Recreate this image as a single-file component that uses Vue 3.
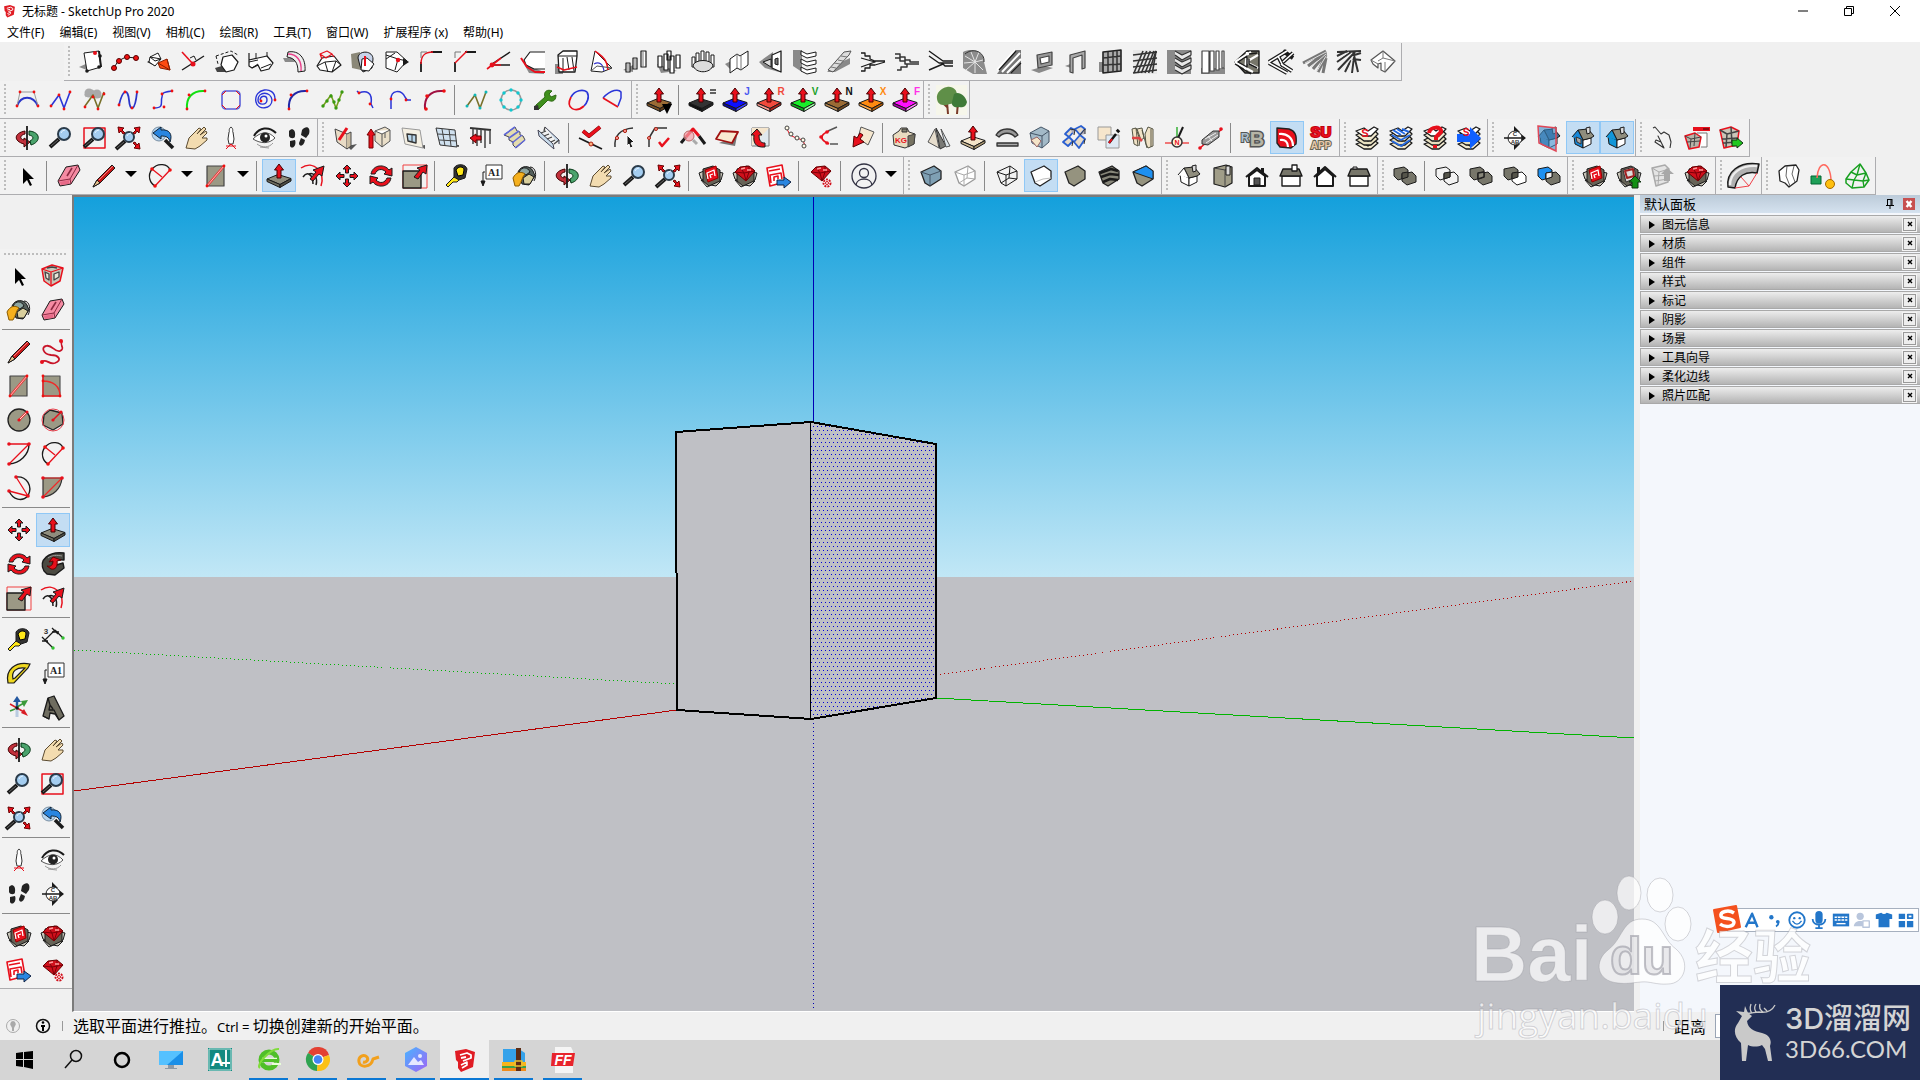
<script setup>
const p = (d, s = '#1a1a1a', f = 'none', w = 1) =>
  `<path d="${d}" stroke="${s}" fill="${f}" stroke-width="${w}" stroke-linejoin="round"/>`
const a = (d, f) => `<path d="${d}" stroke="none" fill="${f}"/>`
const dots = (pts, f = '#f01010', r = 1.4) =>
  pts.map(([x, y]) => `<circle cx="${x}" cy="${y}" r="${r}" fill="${f}" stroke="none"/>`).join('')
const t = (x, y, size, f, s, stroke = 'none', sw = 1) =>
  `<text x="${x}" y="${y}" font-size="${size}" font-weight="700" fill="${f}" stroke="${stroke}" stroke-width="${sw}" paint-order="stroke" text-anchor="middle">${s}</text>`

const RED = '#e8101c'
const K = '#1a1a1a'
const W = '#ffffff'
const G = '#8f8d7d'
const SH = '#8a8a8a'

const lens = (x, y, r) =>
  p(`M${x - r + 1} ${y + r - 1}L${x - r - 8} ${y + r + 7}`, K, 'none', 4) +
  p(`M${x - r} ${y + r}L${x - r - 7} ${y + r + 6}`, '#666', 'none', 1) +
  `<circle cx="${x}" cy="${y}" r="${r}" fill="#a4cdf0" stroke="#2a3b4a" stroke-width="2"/>` +
  p(`M${x - r + 3} ${y - 1}q1 -3 4 -3`, '#e4f3ff', 'none', 1)
const slab = (c, l, r) =>
  p('M0 15L11 10.500L24 14.500L13 20.500z', K, c) + p('M0 15V17.500L13 23.500V20.500z', K, l) + p('M24 14.500V17L13 23.500V20.500z', K, r) +
  p('M12 0L16.500 6H14V14H10V6H7.500z', '#400', RED, 1)
const rcube = (f, s = '#222') => p('M2 8L15 2L22 7V15L11 22L6 19z', s, f, 1.3)
const arrow4 = p('M12 1L16 5H13.500V9H10.500V5H8zM12 23L16 19H13.500V15H10.500V19H8zM1 12L5 8V10.500H9V13.500H5V16zM23 12L19 8V10.500H15V13.500H19V16z', K, RED)
const stack = (c) =>
  p('M1 18L7 16L13 20L20 15L23 17L16 23H9z', K, '#f2ead0', 1.3) + p('M1 14L7 11L13 15L20 10L23 13L16 19H9z', K, c, 1.3) +
  p('M1 9L7 6L13 10L20 5L23 8L16 15H9z', K, '#f2ead0', 1.3) + p('M1 5L9 2L13 5L19 1L23 3L16 10H8z', K, W, 1.3)
const house = (wall, roof) =>
  p('M3 10L12 14V22L4 18z', K, wall) + p('M12 14L20 12V18L12 22z', K, W) + p('M12 14L7 4L17 3L23 10L20 12z', K, roof) +
  p('M1 11L7 4L12 14', K, wall) + p('M15 2L19 1V7L16 8z', K, '#ddd')
const solids = (f1, f2, s = K) =>
  p('M1 5L11 3L15 6V13L5 16L1 12z', s, f1) + p('M9 10L19 8L23 12V18L14 21L9 17z', s, f2) + p('M9 9L15 8V13L9 15z', s, '#55544a')
const boxRed = (c) =>
  p('M0 9L5 7L6 17L2 15zM24 9L19 8L18 17L22 16zM2 16L6 17L12 21L8 23zM22 17L18 17L12 21L17 22z', K, '#c7c4b8') + p('M4 5L14 2L21 6V17L10 22L4 17z', K, '#666357') + c
const redFace = p('M6 6L17 2L19 14L9 18z', '#900', RED) + p('M9 15L8 9L15 6L16 12M12 14L11 11L14 10', W, 'none', 1.3)
const gem = (y) => p(`M2 ${8 + y}L7 ${3 + y}L16 ${2 + y}L22 ${7 + y}L13 ${17 + y}z`, '#600', '#d0101c') + p(`M2 ${8 + y}L11 ${9 + y}L22 ${7 + y}M7 ${3 + y}L11 ${9 + y}L13 ${17 + y}L16 ${8 + y}L16 ${2 + y}`, '#7d0008') + p(`M8 ${5 + y}l4 -1M14 ${6 + y}l4 0`, '#ff9c9c', 'none', 1.3)
const arc = (c) => p('M2 21C1 10 7 2 20 3', c, 'none', 2)
const zig = (c) => p('M2 18L10 7L15 20L21 4', c, 'none', 1.6)
const stripes = (c, n, dx) => Array.from({ length: n }, (_, i) => p(`M${1 + i * (22 / n)} 23L${Math.min(23, 1 + i * (22 / n) + dx)} 1`, c, 'none', 1.6)).join('')

const bucket = p('M5 8C8 1 17 1 20 7L22 12L16 21L9 20z', K, '#55605c') + p('M6 8C9 2 15 3 17 8L13 11z', K, '#8ea6a2') + p('M10 14L16 10L21 13L17 20L11 20z', K, '#d9cf9d') + p('M0 14C3 8 8 7 12 10C9 13 9 17 6 22H2z', '#8a5a00', '#f5b01e') + p('M17 3C23 3 24 12 21 17', K)
const eraser = p('M1 17L9 3L21 1L23 6L14 20L3 22z', K, '#f58ba3') + p('M1 17L13 15L21 1M13 15L14 20', '#8c2a42') + a('M3 18L12 16V20L4 21z', '#e76a88') + p('M10 12L15 4', '#8c2a42', 'none', 1.6)
const pencil = p('M1 23L5 16L20 1L23 4L8 19z', K, '#c81818') + p('M1 23L5 16L8 19z', K, '#e9c48f') + p('M7 16L21 2', '#f58080', 'none', 1)
const rectI = p('M3 2H20V22H3z', '#444', '#9b9985', 1.2) + p('M3 22L20 2', '#e33', 'none', 2.4) + p('M3 22L20 2', '#fdd', 'none', 0.8) + dots([[3, 22], [20, 2]])
const arcI = p('M4 5C10 -2 20 0 22 6M4 5C-1 12 2 19 7 22', K, 'none', 1.3) + p('M4 5L14 13M22 6L7 22', RED, 'none', 1.3) + dots([[4, 5], [22, 6], [7, 22]], '#f01010', 1.8)
const pushI = slab(G, '#6d6b5d', '#504f44')
const offset = p('M0 4C13 -5 25 9 20 22', RED, 'none', 1.5) + p('M2 13C6 7 12 10 12 20M8 10C13 8 17 14 15 21', K, 'none', 1.5) + p('M9 15L15 8L12 6L23 2L21 12L18 10L12 17z', K, RED)
const rotate = p('M2 10C4 0 16 0 20 6L23 4V12L15 10L17 8C13 4 8 5 6 10zM22 14C20 24 8 24 4 18L1 20V12L9 14L7 16C11 20 16 19 18 14z', K, RED)
const scale = p('M0 1H24V24H0z', '#f04040') + p('M0 7H18V24H0z', K, '#9b9985', 1.4) + p('M11 13L17 6L14 4L24 1L23 10L20 8L15 15z', K, RED)
const tape = p('M9 4C12 -1 21 0 22 5L20 14L14 16L9 13z', K, '#333') + p('M11 6C13 2 19 2 19 6L18 11L13 12z', '#000', '#ffe818') + p('M1 21L9 13L14 16L12 18L8 18L3 23z', K, '#ffe818')
const label = p('M7 1H23V15H7z', '#333', W) + `<text x="15" y="12" font-size="10" font-weight="700" fill="#222" stroke="none" text-anchor="middle" style="font-family:'Liberation Serif',serif">A1</text>` + p('M6 8H4V18', K) + p('M2 17H6L4 22z', K, K)
const orbit = p('M10 5C-1 7 -2 15 9 18V21L15 16L9 12V14C4 13 5 9 10 8z', '#400', '#c2303c') + p('M14 5C26 6 26 16 16 19L15 15C19 13 19 10 14 9z', '#031', '#4aa36c') + p('M12 0V24', K, 'none', 1.8)
const hand = p('M1 22L4 12L8 8L14 2L16 3L12 8L19 1L21 3L15 9L21 5L22 7L17 12L22 12L22 14L15 20L10 23z', '#5a4a30', '#f3dcb0')
const zoomExt = lens(12, 11, 5) + p('M1 1L7 2L5 4L8 7L6 8L4 5L2 7zM23 1L17 2L19 4L16 7L18 8L20 5L22 7zM23 23L17 22L19 20L16 17L18 16L20 19L22 17z', '#600', RED)
const undoLens = '<circle cx="8" cy="8" r="7" fill="#b6d5f0" stroke="#7a8fa2"/>' + p('M14 14L22 22', K, 'none', 3.5) + p('M2 7L10 1V4C18 3 22 8 19 16C18 11 15 10 10 10V13z', '#123', '#2a86e0')
const walk = p('M12 1C9 3 11 6 10 6L9 13L10 18H14L15 13L14 6C13 6 15 3 12 1z', '#333', W) + p('M12 18L7 23M12 18L17 23M7 20H17', RED)
const eye = p('M1 10C6 1 16 0 23 7', K, 'none', 2) + p('M0 13C8 5 16 5 22 12C16 18 8 18 0 13z', '#555', W) + '<circle cx="12" cy="11.500" r="5" fill="#222"/><circle cx="13" cy="10" r="1.500" fill="#fff"/>' + p('M4 18C9 22 16 22 20 17M7 21L16 22', '#999')
const feet = a('M2 5C5 1 9 4 8 10C8 13 3 13 2 10zM3 15L8 14C10 20 5 24 3 20zM15 4C19 -1 24 1 22 8L19 12L14 9zM14 12L18 14C17 21 12 21 12 17z', '#222')
const boxes = boxRed(redFace)
const gemBox = boxRed(gem(0))
const layout = p('M0 4L15 1L18 18L3 22z', RED, W, 1.6) + p('M2 7L13 5M4 19L3 11L14 9L15 15M7 17V13L11 12V15', RED, 'none', 1.6) + p('M10 16H17V13L24 18L17 24V21H10z', '#124', '#2a86e0')
const gemGear = gem(0) + '<circle cx="18" cy="19" r="3.500" fill="#fff" stroke="#d0101c" stroke-width="2" stroke-dasharray="2 1"/><circle cx="18" cy="19" r="1.500" fill="none" stroke="#d0101c"/>'
const section = a('M11 0L17 6H11zM11 24L17 18H11zM18 8L23 12L18 16z', K) + '<circle cx="12" cy="12" r="7" fill="#fff" stroke="#222"/>' + p('M1 12H22', K, 'none', 1.5) + t(12, 10, 6, '#333', 'C') + t(12, 18, 6, '#333', 'AB')

const icons = {
  // walls, stairs and surface tools
  panel: a('M0 17L9 13L8 20z', SH) + p('M5 3L20 1L22 17L8 21z', K, W) + p('M20 1L22 17', K, 'none', 2) + dots([[16, 3]], RED, 2) + dots([[8, 21], [20, 17], [21, 6]], K, 1.8),
  nodes: p('M1 18L5 11L13 7L23 8') + [[1, 18], [6, 11], [14, 7], [23, 8]].map(([x, y]) => `<circle cx="${x}" cy="${y}" r="2.500" fill="#f01010" stroke="#500"/>`).join(''),
  unfold: a('M0 12L6 9L8 16z', K) + p('M3 7L11 3L14 9L8 16L2 12z', K, W) + p('M3 7L14 9L8 11z') + p('M11 13L20 9L23 20L13 18z', '#8a1d00', '#ff4a10') + p('M11 13L23 20L20 9', '#8a1d00'),
  cross: p('M1 20L23 6', K, 'none', 1.4) + p('M1 2L12 14', RED, 'none', 1.6) + p('M9 8L13 6L15 10', K) + dots([[12, 14]], RED, 2.5),
  hexwrap: a('M0 18L10 15L12 22H2z', '#444') + p('M8 7L17 5L23 12L19 20L11 22L6 15z', K, W, 1.2) + '<path d="M1 6L16 1L23 5M1 6L3 14" fill="none" stroke="#1a1a1a" stroke-dasharray="3 2"/>',
  extrude: p('M0 3V16L3 18L9 15L12 21L20 19L24 13L18 6L9 8L0 10', K, W, 1.2) + p('M0 12L9 10M3 18L9 14M12 18L22 14M7 3V8M18 2V6', K),
  pipe: a('M0 8H10L14 12H2z', SH) + p('M5 2C16 0 23 8 22 21L15 22C15 13 12 8 4 7z', K, '#eee') + p('M5 4C14 4 19 11 18 21', '#e8408a', 'none', 1.4),
  loft: p('M0 16L5 8L17 6L24 15L15 22L3 20z', K, W, 1.2) + p('M0 16L8 12L19 11L24 15M8 12L11 22M19 11L15 22') + p('M3 4L10 1L15 4L9 8zM3 4L5 9M15 4L17 7', RED, 'none', 1.2),
  wraps: a('M0 4L9 2L10 20L1 18z', '#8b8878') + p('M7 8C7 0 22 0 22 9L21 18L12 22L9 16z', K, '#c8d4ea') + p('M11 9L16 8L23 14L18 21L10 20z', K, W) + p('M14 6V16', RED, 'none', 2),
  vertex: p('M1 2L12 2L22 11L12 22L1 18z', K, W) + p('M1 5L13 9L22 11M13 9L10 20M1 9L10 3') + a('M18 8L24 12L18 16z', K) + dots([[13, 10]], RED, 2.2),
  round: p('M2 22V12M12 2H23', K, 'none', 1.8) + p('M2 14C2 6 5 2 14 2', RED, 'none', 1.5) + p('M2 8V2H8', '#777', 'none', 1),
  chamfer: p('M2 22V12M12 2H23', K, 'none', 1.8) + p('M2 13L14 1', RED, 'none', 1.5) + p('M2 8V2H8', '#777', 'none', 1),
  angle: p('M5 14L23 2M5 15H23', K, 'none', 1.5) + p('M0 19L14 8M5 15H14', RED, 'none', 1.6) + dots([[5, 15]], RED, 2.4),
  edge: a('M8 23L3 14L23 22V24z', SH) + p('M24 2H9L3 10L5 15L13 19H24', K, W, 1.2) + p('M0 8L6 17L14 22H24', RED, 'none', 2),
  cutbox: a('M0 14H8V24H0z', SH) + p('M3 5L8 1H22V6L20 22H4z', K, W, 1.3) + p('M3 6H22M8 8V22M12 7L14 20M17 7L19 21') + p('M2 17L9 20L22 17', RED, 'none', 1.6),
  twist: p('M6 1L2 21L13 22L23 18z', K, W) + p('M6 1C12 6 18 8 19 20', RED, 'none', 1.6) + p('M5 14C10 11 14 14 15 21', '#33c', 'none', 1.2) + p('M2 21L8 16L23 18', '#555'),
  bars: a('M0 20L10 15V22z', SH) + p('M3 13H7V22H3zM10 8H14V19H10zM18 1H23V17H18z', K, W, 1.2) + p('M5 13V22M12 8V19M20 1V17', '#777'),
  columns: a('M0 14L20 21L4 23z', SH) + p('M10 1H14V10H10zM1 6H5V17H1zM7 4H11V20H7zM13 6H17V23H13zM19 5H23V18H19z', K, W, 1.2),
  ring: p('M1 7H4V17H1zM5 3H8V15H5zM10 1H13V14H10zM15 2H18V14H15zM20 5H23V17H20z', K, W) + p('M2 15C5 9 19 9 22 15C20 24 4 24 2 15z', K, '#ddd'),
  fold: a('M0 14L8 10V22z', SH) + p('M5 9L12 4L15 6L23 1V15L16 20L12 18L5 23z', K, W) + p('M12 4V18M16 6V20', '#777'),
  gate: a('M0 12L14 2V12L20 22L6 18z', SH) + p('M13 5L22 1V22L13 18z', K, W, 1.3) + p('M16 9L19 8V15L16 14z', K, '#777') + p('M4 12L12 9V17z', K, '#ddd'),
  shelves: a('M0 0H9V22L0 16z', SH) + p('M8 1L14 4L23 2V6L14 8L8 5zM8 9L14 12L23 10V14L14 16L8 13zM8 17L14 20L23 18V22L14 24L8 21z', K, W),
  ramp: a('M0 22L8 15L23 8V14L8 22z', SH) + p('M1 20L17 2L24 1L22 5L6 22z', '#555', '#ddd') + p('M4 17L9 18M7 13L13 14M11 10L16 11M14 6L20 7', '#777'),
  stair1: p('M0 3H4V6H9V9L14 11H24M0 21H4V18H9V15H14L24 12M0 8L14 12L0 17', K, 'none', 1.3),
  stair2: p('M0 4H5V7H10V10H15V12H24M0 8H5V11H10V14H24M2 20H6V17H12V14', '#333', 'none', 1.5),
  stair3: p('M0 1L14 11H24M0 6L10 13H24M0 20L14 14L16 16H24', K, 'none', 1.4),
  spiral: a('M0 2C10 -3 22 2 21 12L24 24H10L0 18z', '#8c8c8c') + p('M12 12L2 6M12 12L8 2M12 12L16 2M12 12L20 10M12 12L20 20M12 12L12 23M12 12L3 20M12 12L1 13', '#e4e4e4') + p('M2 4C10 -3 22 2 21 12', '#333'),
  rail: a('M0 24L17 0H24V24z', '#777') + p('M0 20L18 0M5 22L23 3M10 23L24 9', W, 'none', 2) + p('M2 20L19 1M14 23L24 13', K, 'none', 1.2),
  frame1: a('M0 20L14 16L22 18L8 23z', SH) + p('M6 5L21 2V15L7 18z', '#444', '#999', 1.2) + p('M9 8L18 6V12L10 14z', '#444', W, 1.2),
  frame2: a('M0 16L8 13L6 18z', SH) + p('M5 22V5L20 1V18L17 19V5L8 8V23z', '#444', '#aaa', 1.2),
  lattice: a('M0 12H8V22H0z', SH) + p('M4 2L22 0V21L4 23z', '#222', '#aaa', 1.6) + p('M9 2V22M14 1V22M18 1V21M4 8L22 6M4 15L22 14', '#333', 'none', 1.5),
  tiles: a('M0 0H24V24H0z', '#e8e8e8') + stripes('#333', 6, 9) + p('M0 5L24 2M0 11L24 8M0 17L24 14M0 23L24 20', '#333', 'none', 1.5),
  chevron: a('M0 0H24V24H0z', SH) + p('M8 1L15 5L24 1V5L15 10L8 5M8 8L15 12L24 8V12L15 17L8 12M8 15L15 19L24 15V19L15 24L8 20', '#333', '#e8e8e8', 1.2),
  boards: a('M0 18H24V24H0z', SH) + p('M1 1H8V23H1zM9 1H13V21H9zM15 1H18V20H15zM21 1H23V18H21z', '#444', W, 1.2),
  tri1: p('M0 12L12 1L24 1V23H10z', K, '#77766a', 1.4) + p('M0 12L16 2M0 12L18 22M12 2L10 20M11 12L23 5M11 12L23 18', W, 'none', 2.2) + p('M0 14L16 24M3 12L12 6V17zM14 4L22 3M14 9V14L22 18', K, 'none', 1.4),
  tri2: p('M0 12L18 1M0 13L18 23M9 6L14 16M14 1L24 8M14 12L24 3M12 14L23 21', K, 'none', 4) + p('M0 12L18 1M0 13L18 23M9 6L14 16M14 12L24 3M12 14L23 21', W, 'none', 1.6),
  slats: p('M0 13L23 1M5 16L23 2M10 19L23 3M15 22L23 5M20 23L23 8', '#777', 'none', 3) + p('M2 13L23 2M8 17L23 4M14 21L23 6', '#ddd'),
  herring: p('M0 2L24 1M0 6L10 1M0 12L14 2M1 20L18 2M8 22L14 10M15 23L17 7M14 6L24 3M15 9L24 10M16 1L21 22', '#333', 'none', 2) + p('M1 9L12 2M4 20L15 8M12 20L16 6', '#eee'),
  fan: p('M0 10L12 1L24 11L14 22L10 20V13L7 14V18L2 14z', '#555', W, 1.2) + p('M12 1V8L7 11M12 8L24 11M14 12V22M0 10L7 14', '#777'),
  // curves
  bezier: p('M2 18C6 7 18 7 23 18', '#2a35c8', 'none', 2) + p('M2 18L5 4H19L23 18', '#999') + dots([[2, 18], [5, 4], [19, 4], [23, 18]]),
  polyB: zig('#2a35d8') + dots([[2, 18], [10, 7], [15, 21], [21, 4]]),
  polyG: dots([[6, 5], [14, 6]], '#aaa', 4.5) + p('M2 8L9 3L18 9', '#aaa', 'none', 3) + zig('#77702a') + dots([[2, 19], [10, 9], [15, 21], [21, 6]]),
  spline: p('M2 17C6 0 11 1 12 12C13 24 18 24 20 4', '#2a35c8', 'none', 1.8) + dots([[2, 17], [8, 4], [15, 20], [20, 4]]),
  sCurve: p('M3 20C14 20 9 14 11 9C11 4 14 4 21 3', '#2a35d8', 'none', 1.5) + dots([[3, 20], [13, 19], [11, 6], [21, 3]]),
  arcG: arc('#10e010') + dots([[2, 21], [4, 7], [20, 3]]),
  roundSq: '<rect x="3" y="3" width="18" height="18" rx="4" fill="none" stroke="#5a5fd8" stroke-width="1.600"/>' + p('M3 7L7 3M17 3L21 7M21 17L17 21M7 21L3 17', RED),
  helix: p('M7 12C8 7 14 7 14 12C14 18 5 17 5 12C5 3 18 3 19 12C19 21 5 23 3 14C0 0 22 -3 22 11', '#2a35d8', 'none', 1.4) + dots([[8, 13], [22, 12]]),
  arcB: arc('#2028a8') + dots([[2, 21], [4, 7], [20, 3]]),
  polyGr: zig('#77a020') + dots([[2, 18], [6, 13], [10, 8], [13, 14], [15, 20], [18, 12], [21, 4]], '#3a9a10', 1.7),
  curve1: p('M2 3L4 5C11 2 18 4 16 16L18 20', '#2a35d8', 'none', 1.5) + dots([[4, 5], [15, 16]]),
  curve2: p('M2 21V11C2 2 12 1 16 9L18 12H22', '#2a35d8', 'none', 1.5) + dots([[2, 11], [17, 12]]),
  arcR: arc('#a01040') + dots([[3, 21], [4, 8], [21, 3]], '#f01010', 1.8),
  polyC: zig('#77702a') + dots([[2, 18], [10, 7], [15, 20], [21, 4]], '#10b8b8', 1.5),
  ringC: '<circle cx="12" cy="12" r="10" fill="none" stroke="#999" stroke-width="1.500"/>' + dots([[12, 2], [19, 5], [22, 12], [19, 19], [12, 22], [5, 19], [2, 12], [5, 5]], '#10c8d0', 1.7),
  wrench: p('M2 21L3 17L12 9C10 3 15 1 19 3L16 6L18 9L23 7C23 14 18 14 15 12L6 21z', '#2f6a14', '#3f8f1c') + a('M1 18L5 17L6 22L1 22z', '#333'),
  oval: p('M4 9C8 2 16 1 20 4', '#2a35d8', 'none', 1.7) + p('M20 4C23 9 20 15 17 18', '#2a35d8', 'none', 1.7) + p('M17 18C9 25 -2 21 4 9', RED, 'none', 1.7),
  wedge: p('M2 10C10 1 18 1 20 4V10L17 18', '#2a35d8', 'none', 1.5) + p('M2 10L17 19', RED, 'none', 1.7),
  pushDrop: slab('#9a6b35', '#7a4f22', '#5f3c18') + a('M15 16H25L20 26z', '#000'),
  pushEq: slab('#333', '#111', '#222') + p('M21 2H27M21 5H27', '#333', 'none', 1.5),
  pushJ: slab('#0d10ff', '#0a0aa0', '#3a40ff') + t(24, 7, 10, '#4a5af0', 'J'),
  pushR: slab('#f04a3c', '#ff9a90', '#b02018') + t(24, 7, 10, '#f04a3c', 'R'),
  pushV: slab('#18f028', '#0ab018', '#a0ffa8') + t(24, 7, 10, '#18a028', 'V'),
  pushN: slab('#9a6b35', '#b98a52', '#6f4820') + t(24, 7, 10, '#111', 'N'),
  pushX: slab('#ff8a10', '#ffa848', '#b85a00') + t(24, 7, 10, '#ff8a10', 'X'),
  pushF: slab('#ff10ff', '#a800a8', '#ff80ff') + t(24, 7, 10, '#ff30e8', 'F'),
  tree: a('M-3 -3H28V27H-3z', '#f6f6ea') + p('M8 14L9 26M19 14L18 26M9 20L5 16M18 20L22 15', '#7a3a28', 'none', 2) + a('M-2 11C-3 5 2 0 8 -1C14 -2 18 2 18 7C18 12 15 16 11 16C6 18 -1 18 -2 11z', '#5f8f48') + a('M15 6C20 3 26 7 28 14C27 19 23 20 20 19C16 20 12 18 13 14z', '#3f7a38'),
  // camera
  orbit, hand, zoomExt, undoLens, walk, eye, feet,
  lens: lens(15, 8, 6),
  lensBox: p('M1 2H22V22H1z', RED, 'none', 1.5) + lens(15, 8, 6),
  // building tools
  door: a('M14 20L24 18L18 24z', '#555') + p('M2 3L14 8V23L4 16z', '#444', '#e9dcc6') + p('M14 8L18 6L18 20L14 23', '#444', '#cdbfa4') + p('M6 14L14 2', RED, 'none', 3),
  lift: p('M8 5L18 1L23 4V15L15 21L8 15z', '#555', '#eadfc9') + p('M15 8V21M8 5L15 8L23 4M18 7V12', '#555', '#fff') + p('M4 3L8 9H6V22H2V9H0z', '#700', RED),
  win: a('M18 20L24 19V23z', '#555') + p('M1 2L19 4L22 22L4 18z', '#999', '#f4efe2') + p('M6 8L15 9V17L7 15z', '#333', '#b9d6ea', 1.4) + p('M11 8V16', '#333'),
  glass: a('M16 19H24V21z', '#555') + p('M1 2L20 4L22 21L5 19z', '#333', '#cfe0ee') + p('M7 3L10 20M14 3L16 20M2 8L21 9M4 14L22 15', '#444'),
  rails: p('M1 2L22 4', '#333', 'none', 2) + p('M4 3V18M8 3V20M12 3V17M16 4V22M21 4V18', '#444', 'none', 1.5) + p('M1 12L7 8V10H12V14H7V17z', '#600', RED),
  steps: p('M1 9L6 11V14L10 16V19L13 22L22 14L20 10L17 9V6L14 5L12 1z', '#445', '#e4dcae') + p('M1 9L12 1M6 12L16 5M9 17L19 9M12 22L22 14', '#6068d8', 'none', 1.6),
  esc: p('M1 4L16 18L17 23L2 10zM8 1L22 14V18', '#445', '#c9dcec') + p('M4 7L9 5M7 10L12 8M10 13L15 11M14 16L18 14M8 1L7 5M22 14L17 18', '#444', 'none', 1.3),
  checkLine: p('M0 12L23 23', K, 'none', 1.8) + p('M4 5L10 10L21 1', '#600', 'none', 4) + p('M4 5L10 10L21 1', RED, 'none', 3) + '<circle cx="12" cy="18" r="2" fill="#f9b080" stroke="#b02010"/>',
  arcCur: p('M2 21C1 10 7 3 20 2', '#333', 'none', 1.5) + '<circle cx="4" cy="12" r="1.600" fill="#f99" stroke="#a21"/><circle cx="12" cy="5" r="1.600" fill="#f99" stroke="#a21"/>' + p('M14 9L21 16L18 17L20 21L17 22L16 18L14 20z', '#fff', K),
  cornerCk: p('M2 21V12L8 2H20', '#333', 'none', 1.5) + '<circle cx="2" cy="12" r="1.500" fill="#f99" stroke="#a21"/><circle cx="9" cy="3" r="1.500" fill="#f99" stroke="#a21"/>' + p('M12 16L15 20L22 12', RED, 'none', 2.5),
  magnet: p('M0 17L5 11M18 10L24 18', K, 'none', 3) + p('M5 11L12 3L18 10', RED, 'none', 3) + '<circle cx="8" cy="10" r="5" fill="#f4a0a8" fill-opacity="0.700" stroke="#b66"/>' + p('M12 14L16 18', '#aaa', 'none', 3),
  para: a('M4 17L22 10L20 20z', '#777') + p('M6 5L23 6L17 17L1 13z', '#a01010', '#f9ead0', 1.8),
  turn: p('M3 2H20V20H3z', '#777', '#dfe8ee') + a('M3 2H20L3 20z', '#f5e5cc') + p('M16 21C6 22 4 16 5 9H2L8 3L13 9H10C10 15 12 17 16 17z', K, RED),
  beads: p('M4 3L7 9L13 12L20 14L22 20', RED) + [[4, 2], [8, 8], [14, 12], [20, 14], [21, 20]].map(([x, y]) => `<circle cx="${x}" cy="${y}" r="2" fill="#fffbe8" stroke="#444"/>`).join(''),
  bend: p('M20 1L11 5M13 18L21 18', '#555', 'none', 1.5) + p('M12 5C2 9 3 14 12 18', RED, 'none', 1.8) + dots([[10, 6], [4, 11], [10, 17]], RED, 1.8),
  tileI: p('M10 1L23 6L17 19L7 12z', '#555', '#f6e8d0') + p('M12 9L9 13L13 16L2 21L3 10L6 12L9 7z', '#500', RED),
  kg: p('M0 9L6 5L8 2H14L16 6L22 8L21 18L12 22L1 19z', '#333', '#e8dcc0') + p('M9 3H14V6H9z', '#333', '#887') + p('M15 10L22 8L21 18L15 21z', '#444', '#777362') + t(8, 17, 8, RED, 'KG'),
  cones: p('M8 3L12 22L1 16z', '#555', '#e6ddcd') + p('M9 2L19 20L13 23z', '#333', '#7a7a76') + p('M14 3L23 20L19 21z', '#555', '#dce5eb'),
  pushCream: slab('#f4e4c8', '#cbb893', '#a8956f'),
  tubeI: p('M1 9C6 1 18 1 23 9L20 11C16 6 8 6 4 11z', '#333', '#999', 1.3) + p('M2 17H23V20H2z', '#333', '#aaa', 1.3),
  glassBox: p('M1 7L12 1L20 5V16L13 22L3 17z', '#456', '#a3bac8') + p('M1 7L13 10L20 5M13 10V22', '#456') + p('M2 14L8 11L12 15L8 21z', '#966', '#f4e4c8'),
  blocks: p('M2 8L8 2L12 4L6 11zM12 3L18 0L22 3L17 9zM0 16L6 11L10 15L5 20zM11 16L17 9L22 13L16 22z', '#2a5fd0', '#e8dcc8', 1.8) + p('M7 3L12 4L11 9M17 9L22 3V8M10 15L9 20M22 13L21 18', '#333', '#aab'),
  sampler: p('M1 1H14V14H1z', '#999', '#f6e6cc') + p('M9 9H22V22H9z', '#999', '#dfeaf4') + p('M12 17L19 8', '#111', 'none', 2.5) + p('M20 6L22 4', '#111', 'none', 3.5) + p('M12 17L15 13', RED, 'none', 2),
  mBlock: p('M1 3L5 2L7 20L3 18zM6 3L11 2L13 12L10 14zM14 8L17 1L22 3V20L17 22L15 18z', '#554', '#f0e2c6') + p('M5 2L9 14L8 20M11 4L16 22M20 3V21', '#554', '#cbb893') + p('M1 12H8L11 15', '#d44', 'none', 2.5),
  north: p('M0 17H24', '#e33', 'none', 1.3) + p('M12 1V12', '#5b5', 'none', 1.8) + p('M13 12L18 1', K, 'none', 2) + '<circle cx="12" cy="16" r="5" fill="#fff3e0" stroke="#333" stroke-width="1.500"/>' + t(12, 19, 7, RED, 'N'),
  rocket: p('M1 22L23 3', RED, 'none', 1.5) + p('M3 14L14 5L20 5L20 11L9 19L3 18z', '#333', '#999') + p('M6 13L17 7M7 17L19 9M9 10L13 15', '#eee') + dots([[1, 22], [22, 3]], RED, 1.8),
  rb: t(4, 16, 12, '#a9c0d0', 'R', '#555', 2) + t(16, 20, 20, '#b7b5a6', 'B', '#555', 3),
  wifi: p('M2 2L14 3C20 5 22 9 21 18L16 22L5 21L2 17z', '#222', RED, 1.4) + p('M4 8C12 7 18 12 18 20M5 14C10 13 13 16 13 21', W, 'none', 2.2),
  suapp: t(12, 11, 15, RED, 'SU', '#c00010', 2) + t(12, 23, 10, '#e8c8a8', 'APP', '#665', 2),
  st1: stack('#e8e0c0') + t(10, 11, 11, RED, 'S'),
  st2: stack('#e8e0c0') + p('M4 4L12 9M8 3L16 8M13 3L20 6M3 9L12 14L21 9M3 15L12 20L21 14', '#2468e0', 'none', 2),
  st3: stack('#e8e0c0') + p('M6 7C7 0 19 0 18 6L13 11V14', RED, 'none', 4) + p('M12 19V22', RED, 'none', 4),
  st4: stack('#e8e0c0') + a('M0 8H13V1L24 12L13 23V16H0z', '#1060ff') + t(9, 10, 10, RED, 'S'),
  section,
  secPlane: house('#5a88b0', '#426a90') + `<path d="M1 0L19 2V25L2 17z" fill="#3a8ac8" fill-opacity="0.600" stroke="#e04858" stroke-width="1.500"/>`,
  secCut: house('#1888d8', G) + p('M5 11L10 13V18L6 16z', '#333', '#aaa'),
  secFill: house('#1296d8', G),
  point: p('M2 2L4 1L10 8L13 6L18 9L20 16L19 22M13 22L4 16L5 14L10 16L7 10z', '#333', 'none', 1.1),
  comp1: p('M12 7H22V21H16', '#777', W) + p('M0 10L10 7L16 11L14 21L4 23z', RED, '#b8b4a8', 1.5) + p('M0 10L6 13L16 11M6 13L5 22M10 7L9 20M2 16L15 15', '#444') + p('M8 3H25', RED, 'none', 4) + p('M18 3H24', '#300'),
  comp2: p('M1 4L12 1L20 5L18 19L5 22z', RED, '#c9c5b8', 1.5) + p('M1 4L8 8L20 5M8 8L7 21M12 1L13 18M3 13L19 12M4 17L18 16', '#444', 'none', 1.5) + p('M13 14H18V12L24 17L18 22V20H13z', '#131', '#1ec81e'),
  // main tools
  cursor: a('M8 4V20L12 16L15 22L17 21L14 15H19z', '#000'),
  eraser, pencil, arcI, rectI, pushI, offset, arrow4, rotate, scale, tape, label, bucket, boxes, gemBox, layout, gemGear,
  user: '<circle cx="12" cy="12" r="12" fill="none" stroke="#334" stroke-width="1.300"/><circle cx="12" cy="9" r="4.500" fill="none" stroke="#334" stroke-width="1.300"/>' + p('M4 21C5 13 19 13 20 21', '#334', 'none', 1.3),
  xray: rcube('#7fa0b4') + p('M2 8L11 11V22M11 11L22 7', '#456'),
  backEdge: rcube(W, '#999') + p('M2 8L11 11V22M11 11L22 7M15 2L14 14L6 19M14 14L22 15', '#aaa'),
  wire: p('M2 8L15 2L22 7V15L11 22L6 19z') + p('M2 8L11 11V22M11 11L22 7M15 2L14 14L6 19M14 14L22 15'),
  hidden: rcube(W) + p('M6 18L14 15L22 14', '#bbb'),
  shaded: rcube('#95937f'),
  textured: rcube('#88877a') + p('M3 9L14 5L21 7M4 13L13 10L22 11M6 18L13 15L21 16', K, 'none', 2.5),
  mono: rcube('#95937f') + p('M2 8L15 2L22 7V15z', '#222', '#1e90f0'),
  iso: house(W, G),
  top: p('M3 4L15 1L21 3V19L14 23L3 20z', K, '#a09d88', 1.2) + p('M14 6V23M3 4L14 6L21 3', '#444') + p('M15 2H19V11H15z', K, '#ddd'),
  front: a('M16 4H19V9H16z', K) + p('M4 12V22H20V12L12 6z', K, W, 2) + p('M1 13L12 4L23 13', K, 'none', 2) + p('M9 21V14H15V21z', K, '#555'),
  right: p('M3 12H21V22H3z', K, W, 1.4) + p('M4 5H20L23 12H1z', K, '#77766a', 1.4) + p('M13 1H18V7H13z', K, W, 1.3),
  back: a('M4 3H7V9H4z', K) + p('M4 12V22H20V12L12 5z', K, W, 2) + p('M1 13L12 3L23 13', K, 'none', 2),
  left: p('M3 12H21V22H3z', K, W, 1.4) + p('M4 5H20L23 12H1z', K, '#77766a', 1.4) + p('M6 3H10V5H6z', K, '#ddd'),
  solid1: solids('#77766a', '#77766a'),
  solid2: solids('none', 'none'),
  solid3: solids('#77766a', '#77766a') + p('M9 9L15 8V13L9 15z', '#222', '#88877a', 1.5),
  solid4: solids('#77766a', '#ffffff'),
  solid5: solids('#1e90f0', '#77766a') + p('M9 9L15 8V13L9 15z', K, '#eee'),
  wh1: boxes,
  wh2: boxRed(p('M6 6L17 3L19 14L9 18z', '#333', '#ddd') + p('M8 7L16 5L17 12L10 14z', '#a02020', 'none', 2)) + p('M15 24V18H12L18 12L24 18H21V24z', '#131', '#149014'),
  wh3: p('M1 4L14 1L18 5L17 18L5 22z', '#aaa', '#e4e4e4', 1.5) + p('M1 4L8 8L18 5M8 8L7 21M3 12L17 11M4 17L17 15', '#aaa') + a('M13 17V10H10L16 4L23 10H19V17z', '#a8a8a8'),
  wh4: gemBox,
  arcBend: p('M-3 23C-5 8 8 -3 28 0L26 9C14 7 6 12 4 24z', K, '#b0b0b0', 1.5) + p('M-1 21C-1 9 10 1 26 2', '#eee', 'none', 2.4) + p('M4 24L18 22L26 9M18 22L10 13', '#f04048'),
  stone: p('M2 7L8 2L19 1L22 6L20 17L12 23L8 19L3 17z', '#222', W, 1.3) + p('M10 2L9 12L13 22M17 2L15 10L18 18', '#666'),
  link: p('M0 12H10V20H0z', '#063', '#1fa058') + p('M6 14C7 -4 19 -4 20 16', '#ff6a60', 'none', 1.5) + '<circle cx="19" cy="20" r="4.500" fill="#ffc010" stroke="#a66a00"/>',
  mesh: p('M1 15L6 8L15 0L21 9L24 16L19 23L7 24L1 19z', '#18a020', 'none', 1.5) + p('M6 8L12 11L21 9M12 11L15 0M1 15L9 16L12 11M9 16L7 24M9 16L18 17L24 16M18 17L19 23M18 17L21 9', '#18a020', 'none', 1.4),
  // left palette only
  component: p('M1 5L11 1L22 4L19 17L10 22L3 17z', RED, '#c9c5b8', 1.5) + p('M1 5L10 8L22 4M10 8V22', RED, 'none', 1.3) + p('M4 8L8 10V16L5 14zM13 10L18 8V13L13 16zM6 4L11 3L16 4', '#444', '#e8e4d8', 1.3),
  freehand: p('M1 22C5 18 8 25 14 23C22 20 17 15 10 15C2 14 0 7 5 6C11 4 14 13 19 11C25 8 18 6 21 1', '#c81428', 'none', 1.8) + dots([[1, 22], [20, 1]], RED, 2),
  rotRect: p('M2 2H19V22H2z', '#555', '#9b9985', 1.2) + p('M2 2V22H19C19 12 12 7 2 7', '#f02828', 'none', 1.5) + dots([[2, 2], [2, 7], [2, 22], [19, 22]]),
  circle: '<circle cx="12" cy="12" r="11" fill="#9b9985" stroke="#222" stroke-width="1.300"/>' + p('M12 12L19 5', '#e33', 'none', 2.4) + p('M12 12L19 5', '#fdd') + dots([[12, 12], [20, 4]], RED, 1.6),
  polygon: p('M9 2L21 5L22 16L12 22L2 17L3 7z', '#222', '#9b9985', 1.3) + '<circle cx="12" cy="12" r="11" fill="none" stroke="#e8404c" stroke-width="1"/>' + p('M12 12L19 5', RED, 'none', 1.5) + dots([[12, 12], [20, 4]], RED, 1.6),
  arc2: p('M22 2C22 13 13 21 2 22', K, 'none', 1.4) + p('M2 2H22L2 22', RED, 'none', 1.3) + dots([[2, 2], [22, 2], [2, 22]], RED, 1.8),
  arc3: p('M9 1C20 0 26 10 21 20C15 26 6 24 2 15', K, 'none', 1.4) + p('M9 1L21 20L2 15', RED, 'none', 1.3) + dots([[9, 1], [21, 20], [2, 15]], RED, 1.8),
  pie: p('M2 2H21C20 13 12 20 2 21z', '#333', '#9b9985', 1.2) + p('M2 2H21L2 21', '#f02828', 'none', 1.2) + dots([[2, 2], [21, 2], [2, 21]], RED, 1.8),
  follow: p('M3 19C-3 8 8 -1 23 1V8C14 7 10 10 12 14L22 11L23 16L14 23L6 22z', K, '#4b4a42', 1.4) + p('M7 6C11 3 16 3 21 4', '#999') + p('M6 14L10 17C14 18 17 15 16 9L20 8L12 5L8 10L12 9C12 13 10 15 6 14z', '#600', RED),
  dims: p('M4 12L14 2M14 2L22 10M4 12L12 20', K, 'none', 1.2) + p('M1 9L7 15M1 13H7M11 0L17 6M11 4H18', K, 'none', 1.3) + dots([[22, 10], [12, 20]], '#30c030', 1.7) + t(5, 6, 8, '#333', '3'),
  protractor: '<path fill-rule="evenodd" d="M1 21C-2 8 8 -1 23 2L21 6L7 21zM6 17C4 9 10 5 18 6L8 16z" fill="#f0d820" stroke="#1a1a1a" stroke-width="1.200"/>',
  axes: p('M10 12V21', '#b9cbe0', 'none', 3) + p('M10 11V5', '#2458a0', 'none', 2.5) + a('M6 6L10 0L14 6z', '#2458a0') + p('M10 11L17 7M3 15L8 13', '#3a9a3a', 'none', 1.6) + p('M3 8L17 16', '#d81c24', 'none', 1.6) + a('M14 5L21 4L17 11z', '#3a9a3a') + a('M14 17L17 13L21 20z', '#d81c24') + dots([[10, 12]], K, 1.8),
  text3d: p('M2 20L7 2L13 0L23 20L18 24L14 18L9 17L8 23z', K, '#6f6d60', 1.3) + p('M7 2L9 9L8 14H13L18 24M9 9L12 13M2 20L8 23', K, 'none', 1.3)
}

const split = (s) => s.trim().split(/\s+/)
const rows = [
  [split('panel nodes unfold cross hexwrap extrude pipe loft wraps vertex round chamfer angle edge cutbox twist bars columns ring fold gate shelves ramp stair1 stair2 stair3 spiral rail frame1 frame2 lattice tiles chevron boards tri1 tri2 slats herring fan')],
  [
    split('bezier polyB polyG spline sCurve arcG roundSq helix arcB polyGr curve1 curve2 arcR | polyC ringC wrench oval wedge'),
    split('pushDrop | pushEq pushJ pushR pushV pushN pushX pushF'),
    split('tree')
  ],
  [
    split('orbit lens lensBox zoomExt undoLens hand walk eye feet'),
    split('door lift win glass rails steps esc | checkLine arcCur cornerCk magnet para turn beads bend tileI | kg cones pushCream tubeI glassBox blocks sampler mBlock north rocket | rb wifi* suapp'),
    split('st1 st2 st3 st4'),
    split('section secPlane secCut* secFill*'),
    split('point comp1 comp2')
  ],
  [
    split('cursor | eraser pencil+ arcI+ rectI+ | pushI* offset arrow4 rotate scale | tape label bucket | orbit hand lens zoomExt | boxes gemBox layout | gemGear | user+'),
    split('xray backEdge | wire hidden* shaded textured mono'),
    split('iso top front right back left'),
    split('solid1 | solid2 solid3 solid4 solid5'),
    split('wh1 wh2 wh3 wh4'),
    split('arcBend'),
    split('stone link mesh')
  ]
]
const palette = [
  split('cursor component bucket eraser'),
  split('pencil freehand rectI rotRect circle polygon arc2 arcI arc3 pie'),
  split('arrow4 pushI* rotate follow scale offset'),
  split('tape dims protractor label axes text3d'),
  split('orbit hand lens lensBox zoomExt undoLens'),
  split('walk eye feet section'),
  split('boxes gemBox layout gemGear')
]
const key = (s) => s.replace(/[*+]/, '')

const menus = ['文件(F)', '编辑(E)', '视图(V)', '相机(C)', '绘图(R)', '工具(T)', '窗口(W)', '扩展程序 (x)', '帮助(H)']
const trays = ['图元信息', '材质', '组件', '样式', '标记', '阴影', '场景', '工具向导', '柔化边线', '照片匹配']

const suLogo = a('M2 4L13 2L22 5L20 20L8 25L5 21V15L3 13z', '#e01c24') + p('M7 8L14 6L18 8V11L10 14M13 10L8 11', W, 'none', 1.8) + p('M8 18L14 15V18L9 21', W, 'none', 1.6)
const taskIcons = [
  { k: 'start', i: a('M4 6L11 5V12H4zM12 5L21 4V12H12zM4 13H11V20L4 19zM12 13H21V22L12 20z', '#000') },
  { k: 'search', i: '<circle cx="15" cy="9" r="5.500" fill="none" stroke="#111" stroke-width="1.500"/>' + p('M11 13L4 21', '#111', 'none', 1.5) },
  { k: 'cortana', i: '<circle cx="12" cy="13" r="7" fill="none" stroke="#000" stroke-width="2.500"/>' },
  { k: 'computer', i: a('M0 4H24V18H0z', '#1a8fe8') + a('M0 4H24L8 18H0z', '#55c1ff') + a('M9 18H15V21H18V22H6V21H9z', '#8e9aa6') },
  { k: 'cad', i: a('M0 1H24V24H0z', '#128a80') + p('M1 2H23V23H1z', '#bfe6e2') + t(9, 19, 18, W, 'A') + p('M18 3V20M14 16H22', W, 'none', 1.8) },
  { k: 'browser', run: 1, i: '<circle cx="12" cy="13" r="8" fill="none" stroke="#4fbf28" stroke-width="5"/>' + p('M5 13H20', '#e8ffd8', 'none', 4.5) + p('M5 13.500H21', '#4fbf28', 'none', 3) + p('M3 21C-2 18 14 1 22 2', '#7fdc3a', 'none', 2) + a('M15 16H24V18H15z', '#e8ffd8') },
  { k: 'chrome', run: 1, i: a('M12 12L2 6A11.500 11.500 0 0 1 23 8z', '#e34133') + a('M12 12L2 6A11.500 11.500 0 0 0 11 24z', '#2fa350') + a('M12 12L11 24A11.500 11.500 0 0 0 23 8z', '#fbc116') + '<circle cx="12" cy="12.500" r="5.500" fill="#fff"/><circle cx="12" cy="12.500" r="4.300" fill="#4285f4"/>' },
  { k: 'swirl', run: 1, i: p('M8 15C11 16 14 13 12 10C9 7 3 9 4 15C5 21 16 21 18 12L24 10', '#f2a01c', 'none', 3) },
  { k: 'photos', run: 1, i: '<defs><linearGradient id="hex" x2="1" y2="1"><stop stop-color="#48b4ff"/><stop offset="1" stop-color="#a065f5"/></linearGradient></defs><path d="M12 0L23 6V19L12 25L1 19V6z" fill="url(#hex)"/>' + a('M4 18L10 10L14 15L17 13L20 18z', '#e6e8ff') + dots([[16, 9]], '#e6e8ff', 2) },
  { k: 'sketchup', run: 1, on: 1, i: suLogo },
  { k: 'archive', run: 1, i: a('M1 2H17L23 6V15H1z', '#35a2ea') + a('M0 15H24V19H0z', '#f7b51c') + a('M0 19H24V21H0z', '#3aa24a') + a('M0 21H24V24H0z', '#f08c1c') + a('M14 1H19V24H14z', '#5d2d16') + p('M13 14H20V19H13z', '#e8c030', 'none', 1.5) },
  { k: 'ff', run: 1, i: a('M4 0H20L22 4V26H4z', '#f5f5f5') + a('M1 6H24L22 19H0z', '#e8242c') + `<text x="12" y="18" font-size="14" font-weight="700" font-style="italic" fill="#fff" stroke="none" text-anchor="middle">FF</text>` }
]
const B = '#2276c9'
const ime = [
  { k: '英文', i: p('M3 19L10 4L16 19M6 14H14', B, 'none', 2.6) },
  { k: '标点', i: dots([[7, 8]], B, 2.4) + dots([[14, 13]], B, 2) + p('M15 13Q15 17 12 18', B, 'none', 1.8) },
  { k: '表情', i: '<circle cx="11" cy="11" r="8.500" fill="none" stroke="#2276c9" stroke-width="2"/>' + dots([[8, 9], [14, 9]], B, 1.3) + p('M6 12Q11 19 16 12', B, 'none', 1.5) },
  { k: '语音', i: a('M7 5A4 4 0 0 1 15 5V11A4 4 0 0 1 7 11z', B) + p('M4 10C4 18 18 18 18 10M11 16V20M7 20H15', B, 'none', 2) },
  { k: '键盘', i: a('M2 4H20V18H2z', B) + p('M4 8H18M4 11H18', W, 'none', 1.5) + p('M6 15H16', W, 'none', 1.5) + p('M7 7V12M11 7V12M15 7V12', B) },
  { k: '用户', i: dots([[9, 7]], '#b9c6dc', 4) + a('M2 18C2 10 16 10 16 18z', '#b9c6dc') + p('M12 12H19V19H12z', '#b9c6dc', W, 1.5) },
  { k: '皮肤', i: a('M2 5L8 3Q11 6 14 3L20 5V10H17V19H5V10H2z', B) },
  { k: '工具箱', i: a('M3 4H10V10H3zM3 12H10V19H3zM12 12H19V19H12z', B) + p('M13 5H18V9H13z', B, 'none', 2) }
]
</script>

<template>
  <div class="app">
    <header class="title">
      <svg class="logo" viewBox="0 0 24 26" v-html="suLogo"></svg>
      <span>无标题 - SketchUp Pro 2020</span>
      <div class="wins">
        <button aria-label="最小化"><svg viewBox="0 0 12 12"><path d="M1 6H11" /></svg></button>
        <button aria-label="还原"><svg viewBox="0 0 12 12"><path d="M1.500 3.500H8.500V10.500H1.500zM3.500 3.500V1.500H10.500V8.500H8.500" /></svg></button>
        <button aria-label="关闭"><svg viewBox="0 0 12 12"><path d="M1 1L11 11M11 1L1 11" /></svg></button>
      </div>
    </header>
    <nav class="menu">
      <button v-for="m in menus" :key="m">{{ m }}</button>
    </nav>

    <div class="bars">
      <div v-for="(row, r) in rows" :key="r" class="row" :class="{ inset: r === 0 }">
        <div v-for="(bar, b) in row" :key="b" class="bar" role="toolbar">
          <template v-for="(n, i) in bar" :key="i">
            <span v-if="n === '|'" class="sep"></span>
            <div v-else-if="n.includes('+')" class="drop">
              <button class="tool" :aria-label="key(n)"><svg viewBox="0 0 24 24" v-html="icons[key(n)]"></svg></button>
              <button class="caret" aria-label="more"><i></i></button>
            </div>
            <button v-else class="tool" :class="{ on: n.includes('*') }" :aria-label="key(n)">
              <svg viewBox="0 0 24 24" v-html="icons[key(n)]"></svg>
            </button>
          </template>
        </div>
      </div>
    </div>

    <main class="work">
      <aside class="palette">
        <div class="pbox">
          <div class="grip"></div>
          <div v-for="(g, i) in palette" :key="i" class="group">
            <button v-for="n in g" :key="n" class="tool" :class="{ on: n.includes('*') }" :aria-label="key(n)">
              <svg viewBox="0 0 24 24" v-html="icons[key(n)]"></svg>
            </button>
          </div>
        </div>
      </aside>

      <section class="view">
        <svg viewBox="74 197 1560 814" preserveAspectRatio="xMidYMid slice">
          <defs>
            <linearGradient id="sky" x2="0" y2="1">
              <stop offset="0" stop-color="#14a0dc" />
              <stop offset="1" stop-color="#c1e7f6" />
            </linearGradient>
            <pattern id="sel" width="4" height="8" patternUnits="userSpaceOnUse" x="811" y="422">
              <path d="M2 4h1v1h-1zM0 0h1v1h-1z" fill="#0000d8" />
            </pattern>
          </defs>
          <path d="M74 197H1634V577H74z" fill="url(#sky)" />
          <path d="M74 577H1634V1011H74z" fill="#bfc0c5" />
          <g fill="none" shape-rendering="crispEdges">
            <path d="M813.500 197V422" stroke="#0000b4" />
            <path d="M813.500 719V1011" stroke="#0000b4" stroke-dasharray="1 3" />
            <path d="M74 791L677 710" stroke="#b40000" />
            <path d="M936 675L1634 581" stroke="#b40000" stroke-dasharray="1 3" />
            <path d="M936 698L1634 738" stroke="#00b400" />
            <path d="M74 650L676 684" stroke="#00b400" stroke-dasharray="1 3" />
            <path d="M676 432L811 422L936 444V698L811 719L677 710z" fill="#bfc0c5" />
            <path d="M811 422L936 444V698L811 719z" fill="url(#sel)" />
            <path d="M676 432L811 422L936 444V698L811 719L677 710z" stroke="#000" stroke-width="2" />
            <path d="M810.500 422V719" stroke="#000" />
          </g>
        </svg>
      </section>

      <aside class="tray">
        <div class="thead">
          <span>默认面板</span>
          <button class="pin" aria-label="固定"><svg viewBox="0 0 10 10"><path d="M2.500 0V6M2.500 .5H7M7 0V6M6 0V6M1 6.500H9M5 6V10" /></svg></button>
          <button class="tclose" aria-label="关闭面板"><svg viewBox="0 0 10 10"><path d="M3 2.500L7 7.500M7 2.500L3 7.500" /></svg></button>
        </div>
        <div v-for="x in trays" :key="x" class="trow">
          <button class="exp"><i></i>{{ x }}</button>
          <button class="x" :aria-label="'关闭' + x"><svg viewBox="0 0 10 10"><path d="M3 3L7 7M7 3L3 7" /></svg></button>
        </div>
      </aside>
    </main>

    <footer class="status">
      <svg class="sicon" viewBox="0 0 16 16"><circle cx="8" cy="8" r="6.500" fill="#f0f0f0" stroke="#aaa" /><path d="M8 3a3 3 0 0 1 2 5L9 10V13H7V10L6 8A3 3 0 0 1 8 3z" fill="#aaa" /></svg>
      <svg class="sicon" viewBox="0 0 16 16"><circle cx="8" cy="8" r="6.500" fill="#f0f0f0" stroke="#111" stroke-width="1.500" /><circle cx="8" cy="4.500" r="1.300" /><path d="M6 7H10V9H9V13H7V9H6z" /></svg>
      <span class="bar-line"></span>
      <p>选取平面进行推拉。<small>Ctrl = </small>切换创建新的开始平面。</p>
      <label class="measure"><span class="bar-line"></span>距离 <input type="text" /></label>
    </footer>

    <footer class="task">
      <button v-for="k in taskIcons" :key="k.k" :class="{ run: k.run, on: k.on }" :aria-label="k.k">
        <svg viewBox="0 0 24 26" v-html="k.i"></svg>
      </button>
    </footer>

    <div class="ime">
      <svg class="sogou" viewBox="0 0 28 28"><path d="M1 5L23 1L27 22L5 27z" fill="#f4511e" stroke="#f4511e" stroke-width="2" stroke-linejoin="round" /><path d="M21 8C15 4 7 7 8 11C9 15 20 12 21 17C21 22 12 23 7 19" fill="none" stroke="#fff" stroke-width="3.500" /></svg>
      <button v-for="m in ime" :key="m.k" :aria-label="m.k"><svg viewBox="0 0 22 22" v-html="m.i"></svg></button>
    </div>

    <svg class="mark" viewBox="0 0 380 190">
      <g fill="#fff" fill-opacity="0.700" stroke="#8c8c96" stroke-opacity="0.350">
        <text class="bai" x="1" y="122">Bai</text>
        <ellipse cx="135" cy="58" rx="13" ry="17" />
        <ellipse cx="159" cy="34" rx="12" ry="17" />
        <ellipse cx="190" cy="36" rx="13" ry="17" />
        <ellipse cx="208" cy="65" rx="13" ry="17" />
        <path d="M172 60C192 60 192 80 206 90C222 104 214 125 198 125C186 126 180 122 171 123C160 124 156 125 148 124C126 122 124 102 138 91C153 80 152 60 172 60z" />
        <text class="yan" x="225" y="119">经验</text>
        <text class="url" x="7" y="170">jingyan.baidu</text>
      </g>
      <text class="du" x="140" y="115">du</text>
    </svg>

    <div class="brand">
      <svg viewBox="0 0 44 60"><path d="M10 13L4 8L12 9L13 3L16 10L20 13L15 18C16 26 22 28 30 30C38 32 40 38 38 43L40 58H36L33 46L30 42C26 44 20 44 16 42L14 58H10L9 40C2 34 1 26 6 20z" fill="#c9c9c9" /><path d="M15 10C19 11 22 9 27 9C34 10 40 8 43 2M20 10C17 7 18 4 19 1M24 9C22 6 22 4 24 1M31 9C28 7 27 4 28 1M35 8L32 5" fill="none" stroke="#c9c9c9" stroke-width="1.300" /></svg>
      <div class="names"><b>3D溜溜网</b><span>3D66.COM</span></div>
    </div>
  </div>
</template>

<style>
body { margin: 0; }
</style>

<style scoped>
.app {
  position: relative;
  display: flex;
  flex-direction: column;
  min-height: 100vh;
  background: #f0f0f0;
  color: #000;
  font-family: "Noto Sans", "Noto Sans CJK SC", sans-serif;
  font-size: 12px;
  overflow: hidden;
}
button { margin: 0; padding: 0; border: 0; background: none; font: inherit; color: inherit; }
svg { display: block; overflow: visible; }
.title { display: flex; align-items: center; box-sizing: border-box; height: 23px; padding: 0 2px 2px 3px; background: #fff; }
.logo { width: 13px; height: 14px; margin-right: 6px; }
.wins { display: flex; margin-left: auto; }
.wins button { display: grid; place-items: center; width: 46px; height: 20px; }
.wins svg { width: 12px; height: 12px; fill: none; stroke: #000; }
.menu { display: flex; gap: 1px; height: 19px; background: #fff; }
.menu button { padding: 0 7px; line-height: 18px; white-space: nowrap; }
.bars { padding-top: 1px; }
.row { display: flex; height: 38px; }
.row.inset { padding-left: 64px; }
.bar {
  position: relative;
  display: flex;
  align-items: flex-start;
  box-sizing: border-box;
  height: 38px;
  padding: 2px 1px 0 10px;
  border: solid #adadb0;
  border-width: 0 1px 1px 0;
  background: #f2f2f2;
}
.bar::before {
  content: "";
  position: absolute;
  left: 4px;
  top: 3px;
  width: 2px;
  height: 32px;
  background: repeating-linear-gradient(#bdbdbd 0 2px, transparent 2px 4px);
}
.tool { display: grid; place-items: center; box-sizing: border-box; width: 34px; height: 33px; border: 1px solid transparent; }
.tool.on { background: #c3ddf3; border-color: #90c8f6; }
.tool svg { width: 24px; height: 24px; }
.tool svg, .task svg { font-family: "Liberation Sans", sans-serif; }
.sep { width: 1px; height: 30px; margin: 2px 5px 0 2px; background: #8a8a8a; }
.drop { display: flex; width: 56px; }
.drop .tool { width: 36px; }
.caret { display: grid; place-items: center; width: 18px; height: 30px; }
.caret i { border: 6px solid transparent; border-top-color: #000; border-bottom: 0; }

.work { display: flex; flex: 1; }
.palette { box-sizing: border-box; width: 72px; padding-top: 54px; }
.pbox { padding: 0 2px 1px; background: #f2f2f2; border-bottom: 1px solid #adadb0; }
.grip { height: 2px; margin: 0 2px; border-top: 4px solid #f2f2f2; border-bottom: 4px solid #f2f2f2; background: repeating-linear-gradient(90deg, #bdbdbd 0 2px, transparent 2px 4px); }
.group { display: flex; flex-wrap: wrap; }
.group .tool { height: 34px; }
.group + .group { margin-top: 2px; padding-top: 5px; border-top: 1px solid #8a8a8a; }
.view { position: relative; flex: 1; min-width: 0; border: solid #7b7b7b; border-width: 2px 0 0 2px; border-bottom: 1px solid #fff; }
.view svg { position: absolute; inset: 0; width: 100%; height: 100%; overflow: hidden; }

.tray { display: flex; flex-direction: column; box-sizing: border-box; width: 286px; padding-left: 6px; background: linear-gradient(90deg, #f0f0f0 6px, #f4f7fc 6px); }
.thead { display: flex; align-items: center; box-sizing: border-box; height: 18px; margin-bottom: 2px; padding: 0 5px 1px 4px; font-size: 13px; line-height: 16px; background: linear-gradient(#bccbd9, #d5e2ef); }
.thead .pin { margin-left: auto; margin-right: 8px; }
.pin svg { width: 10px; height: 10px; stroke: #000; fill: none; }
.tclose { width: 12px; height: 12px; background: #c75050; }
.tclose svg { width: 12px; height: 12px; stroke: #fff; stroke-width: 2; }
.trow {
  display: flex;
  align-items: center;
  box-sizing: border-box;
  height: 18px;
  margin-bottom: 1px;
  border: 1px solid #a9a9a9;
  border-right: 0;
  background: linear-gradient(#ededed, #b4b4b4);
}
.exp { display: flex; align-items: center; flex: 1; padding: 1px 0 0 8px; line-height: 16px; }
.exp i { margin-right: 7px; border: 4px solid transparent; border-left: 6px solid #000; border-right: 0; }
.x { display: grid; place-items: center; box-sizing: border-box; width: 13px; height: 13px; margin-right: 4px; border: 1px solid #999; background: #eee; outline: 1px solid #f4f4f4; }
.x svg { width: 10px; height: 10px; stroke: #000; stroke-width: 1.4; }

.status { display: flex; align-items: center; height: 28px; padding-left: 5px; }
.sicon { width: 16px; height: 16px; margin-right: 14px; }
.sicon + .sicon { margin-right: 11px; }
.bar-line { width: 1px; height: 10px; margin-right: 10px; background: #999; }
.status p { margin: 0; font-size: 16px; line-height: 28px; white-space: pre; }
.status small { font-size: 13px; }
.measure { display: flex; align-items: center; width: 257px; margin-left: auto; font-size: 16px; }
.measure input { box-sizing: border-box; width: 190px; height: 24px; margin-left: 9px; border: 1px solid #9aa5b5; background: #fff; }

.task { display: flex; height: 40px; background: #d5d5d5; }
.task button { position: relative; display: grid; place-items: center; width: 49px; height: 40px; }
.task button:first-child { width: 48px; }
.task button.on { background: #f0f0f0; }
.task svg { width: 24px; height: 26px; }
.task .run::after { content: ""; position: absolute; left: 5px; right: 5px; bottom: 0; height: 2px; background: #0b78d4; }
.task .run.on::after { left: 0; right: 0; }

.ime { position: absolute; right: 1px; bottom: 148px; display: flex; align-items: center; box-sizing: border-box; width: 192px; height: 24px; padding-left: 15px; border: 1px solid #a6b0bf; background: #fff; }
.ime button { width: 22px; }
.ime button svg { width: 20px; height: 20px; }
.ime .sogou { position: absolute; left: -15px; top: -4px; width: 28px; height: 28px; }

.mark { position: absolute; right: 70px; bottom: 31px; width: 380px; height: 190px; pointer-events: none; }
.bai { font: 700 78px "Liberation Sans", sans-serif; }
.yan { font: 700 58px "Noto Sans CJK SC", sans-serif; }
.url { font: 500 37px "Open Sans", sans-serif; }
.du { font: 700 52px "Liberation Sans", sans-serif; fill: #dcdce0; fill-opacity: 0.6; stroke: #9a9aa4; stroke-opacity: 0.6; stroke-width: 2px; }

.brand { position: absolute; right: 0; bottom: 0; display: flex; align-items: center; box-sizing: border-box; width: 200px; height: 95px; padding-left: 12px; background: #222e54; color: #d4d4d4; }
.brand svg { width: 44px; height: 60px; margin-right: 9px; }
.names { display: flex; flex-direction: column; white-space: nowrap; }
.names b { font: 500 29px/32px Inter, "Noto Sans CJK SC", sans-serif; }
.names span { font: 400 24px/28px Lato, sans-serif; }
</style>
